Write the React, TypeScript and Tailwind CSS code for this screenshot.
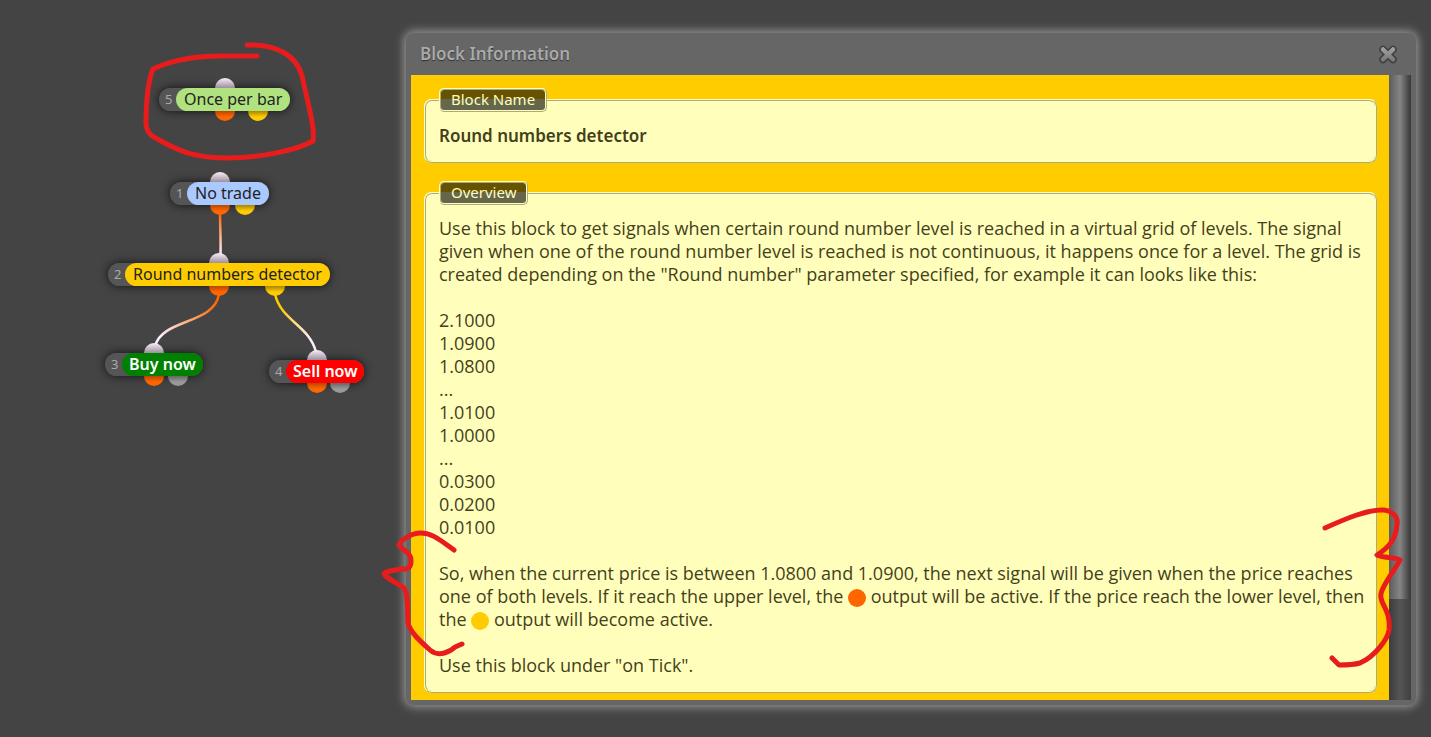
import type { ReactNode } from "react";

type BlockNode = {
  id: number;
  title: string;
  place: string;
  label: string;
  inPort: string;
  outPorts: string[];
};

const nodes: BlockNode[] = [
  {
    id: 5,
    title: "Once per bar",
    place: "left-[159px] top-[88px]",
    label: "px-2 bg-[#b0e280] text-[#222]",
    inPort: "left-[56px]",
    outPorts: ["left-[56px] from-[#b84700] to-[#ff6600]", "left-[89px] from-[#a88600] to-[#ffcc00]"],
  },
  {
    id: 1,
    title: "No trade",
    place: "left-[170px] top-[182px]",
    label: "px-2 bg-[#a9c9ff] text-[#222]",
    inPort: "left-[40px]",
    outPorts: ["left-[40px] from-[#b84700] to-[#ff6600]", "left-[65px] from-[#a88600] to-[#ffcc00]"],
  },
  {
    id: 2,
    title: "Round numbers detector",
    place: "left-[108px] top-[263px]",
    label: "px-2 bg-[#ffcc00] text-[#222]",
    inPort: "left-[101px]",
    outPorts: ["left-[101px] from-[#b84700] to-[#ff6600]", "left-[157px] from-[#a88600] to-[#ffcc00]"],
  },
  {
    id: 3,
    title: "Buy now",
    place: "left-[105px] top-[353px]",
    label: "px-[7px] bg-[#008000] text-white font-semibold",
    inPort: "left-[39px]",
    outPorts: ["left-[39px] from-[#b84700] to-[#ff6600]", "left-[63px] from-[#666] to-[#999]"],
  },
  {
    id: 4,
    title: "Sell now",
    place: "left-[269px] top-[360px]",
    label: "px-[7px] bg-[#ff0000] text-white font-semibold",
    inPort: "left-[38px]",
    outPorts: ["left-[38px] from-[#b84700] to-[#ff6600]", "left-[61px] from-[#666] to-[#999]"],
  },
];

const levels = ["2.1000", "1.0900", "1.0800", "...", "1.0100", "1.0000", "...", "0.0300", "0.0200", "0.0100"];

function Node({ node }: { node: BlockNode }) {
  return (
    <div className={`absolute h-[23px] ${node.place}`}>
      <div className="absolute inset-0 rounded-full shadow-[0_0_10px_rgba(0,0,0,0.75)]" />
      <span
        className={`absolute -top-[10px] h-[20px] w-[20px] rounded-full bg-linear-to-b from-[#fbeefb] via-[#9c909c] to-[#9c909c] ${node.inPort}`}
      />
      {node.outPorts.map((port) => (
        <span key={port} className={`absolute top-[13px] h-[20px] w-[20px] rounded-full bg-linear-to-b from-50% to-80% ${port}`} />
      ))}
      <div className="relative flex h-full items-stretch rounded-full bg-[#555]">
        <span className="w-[17px] pl-[6px] text-[13px] leading-[23px] text-[#aaa]">{node.id}</span>
        <span className={`rounded-full text-[16px] leading-[22px] whitespace-nowrap ${node.label}`}>{node.title}</span>
      </div>
    </div>
  );
}

function Wires() {
  return (
    <svg className="absolute inset-0 h-full w-full" fill="none" strokeWidth="2.5">
      <defs>
        <linearGradient id="wire-a" gradientUnits="userSpaceOnUse" x1="0" y1="214" x2="0" y2="254">
          <stop offset="0" stopColor="#ff6600" />
          <stop offset="1" stopColor="#fbeefb" />
        </linearGradient>
        <linearGradient id="wire-b" gradientUnits="userSpaceOnUse" x1="219" y1="296" x2="156" y2="343">
          <stop offset="0.1" stopColor="#ff6600" />
          <stop offset="0.9" stopColor="#fbeefb" />
        </linearGradient>
        <linearGradient id="wire-c" gradientUnits="userSpaceOnUse" x1="275" y1="296" x2="316" y2="350">
          <stop offset="0.2" stopColor="#ffcc00" />
          <stop offset="0.8" stopColor="#fbeefb" />
        </linearGradient>
      </defs>
      <path d="M220 212 C220 230 221 236 220.500 256" stroke="url(#wire-a)" />
      <path d="M219 294 C214 325 163 318 155 346" stroke="url(#wire-b)" />
      <path d="M275 294 C281 321 309 325 316 352" stroke="url(#wire-c)" />
    </svg>
  );
}

function Markings() {
  return (
    <svg
      className="pointer-events-none absolute inset-0 h-full w-full"
      fill="none"
      stroke="#e81c1c"
      strokeWidth="5"
      strokeLinecap="round"
      strokeLinejoin="round"
    >
      <path d="M257 56 H222 C192 56 170 61 153 69 C149 79 146 98 146 124 C147 134 153 137 161 141 C181 152 196 158 228 158 C260 158 297 150 313 141 C315 128 309 108 302 76 C297 57 279 44 247 45" />
      <path d="M454 550 C440 540 432 533 421 533 C410 533 400 541 399 545 C403 551 412 553 411 561 C411 568 408 569 402 569 C394 570 386 571 384 574 C388 580 400 584 404 588 C409 596 407 611 408 623 C410 632 420 641 430 650 C439 658 451 651 455 647 L462 644" />
      <path d="M1325 528 C1345 519 1368 509 1384 510 C1393 511 1398 517 1397 524 C1396 540 1388 548 1377 555 C1383 558 1395 557 1400 560 C1396 568 1382 586 1381 594 C1379 604 1391 609 1389 630 C1388 638 1376 656 1360 663 C1353 665 1346 665 1339 665 L1332 658" />
    </svg>
  );
}

function CloseIcon() {
  return (
    <svg viewBox="0 0 20 20" className="h-[20px] w-[20px]" fill="none" strokeLinecap="round">
      <defs>
        <linearGradient id="close-fill" gradientUnits="userSpaceOnUse" x1="0" y1="2" x2="0" y2="18">
          <stop offset="0" stopColor="#a8a8a8" />
          <stop offset="1" stopColor="#747474" />
        </linearGradient>
      </defs>
      <path d="M5 5.500 L15 15.500 M15 5.500 L5 15.500" stroke="#404040" strokeWidth="7.500" />
      <path d="M5 5.500 L15 15.500 M15 5.500 L5 15.500" stroke="url(#close-fill)" strokeWidth="4.500" />
    </svg>
  );
}

function Section({ title, children }: { title: string; children: ReactNode }) {
  return (
    <fieldset className="min-w-0 rounded-[8px] border-2 border-[#ffffbb] bg-[#ffffbb] pr-1 pb-3 pl-[13px] [border-style:ridge]">
      <legend className="rounded-[5px] border-2 border-[#ffffbb] bg-black/60 px-[10px] pb-[2px] text-[15px] leading-[18px] text-[#ffffbb] [border-style:ridge]">
        {title}
      </legend>
      {children}
    </fieldset>
  );
}

function Dot({ color }: { color: string }) {
  return <span className={`inline-block h-[18px] w-[18px] rounded-full align-[-4px] ${color}`} />;
}

export default function App() {
  return (
    <main className="relative flex min-h-screen overflow-hidden bg-[#444] font-['Noto_Sans','Open_Sans',sans-serif]">
      <section aria-label="Block diagram" className="relative w-[406px] shrink-0">
        <Wires />
        {nodes.map((node) => (
          <Node key={node.id} node={node} />
        ))}
      </section>

      <div className="flex min-w-0 flex-1 pt-[33px] pr-[15px] pb-8">
        <div
          role="dialog"
          aria-labelledby="dialog-title"
          className="flex flex-1 flex-col rounded-[8px] bg-[#666] px-[5px] pb-[5px] shadow-[0_0_10px_2px_#999]"
        >
          <header className="flex h-[42px] items-center justify-between pr-[13px] pl-[9px]">
            <h1 id="dialog-title" className="text-[17px] font-semibold text-[#aaa] [text-shadow:0_1px_1px_#333]">
              Block Information
            </h1>
            <button type="button" aria-label="Close">
              <CloseIcon />
            </button>
          </header>

          <div className="flex flex-1">
            <div className="flex min-w-0 flex-1 flex-col gap-[18px] bg-[#ffcc00] pt-[13px] pr-[12px] pb-[7px] pl-[13px] text-[#443f1c]">
              <Section title="Block Name">
                <p className="pt-[12px] pb-[2px] text-[17px] leading-[23px] font-semibold">Round numbers detector</p>
              </Section>
              <Section title="Overview">
                <div className="flex flex-col gap-[23px] pt-[12px] pb-[2px] font-['Open_Sans','Noto_Sans',sans-serif] text-[18px] leading-[23px]">
                  <p>
                    Use this block to get signals when certain round number level is reached in a virtual grid of levels.
                    The signal given when one of the round number level is reached is not continuous, it happens once
                    for a level. The grid is created depending on the "Round number" parameter specified, for example it
                    can looks like this:
                  </p>
                  <ul>
                    {levels.map((level, i) => (
                      <li key={i}>{level}</li>
                    ))}
                  </ul>
                  <p>
                    So, when the current price is between 1.0800 and 1.0900, the next signal will be given when the
                    price reaches one of both levels. If it reach the upper level, the{" "}
                    <Dot color="bg-[#ff6600]" /> output will be active. If the price reach the lower level, then the{" "}
                    <Dot color="bg-[#ffcc00]" /> output will become active.
                  </p>
                  <p>Use this block under "on Tick".</p>
                </div>
              </Section>
            </div>
            <div className="flex w-[22px] flex-col bg-linear-to-r from-[#3c3c3c] via-[#555] to-[#404040]">
              <div className="h-[524px] bg-linear-to-r from-[#5c5c5c] via-[#858585] to-[#383838]" />
            </div>
          </div>
        </div>
      </div>
      <Markings />
    </main>
  );
}
